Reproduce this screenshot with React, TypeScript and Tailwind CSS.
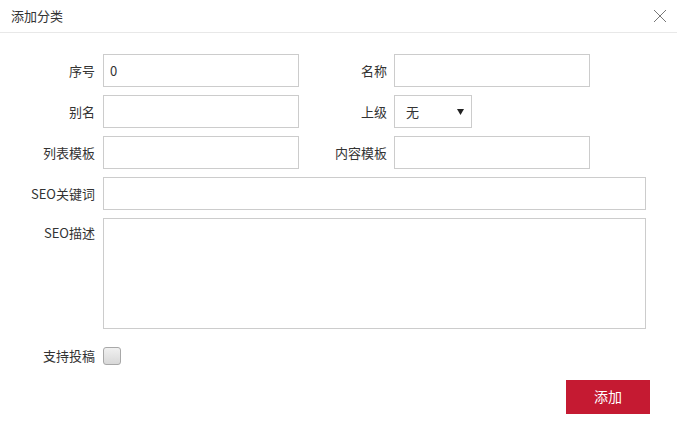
import React from "react";

const font = { fontFamily: '"Microsoft YaHei", "Noto Sans CJK SC", "Noto Sans", sans-serif' };

const Label: React.FC<{ text: string; className?: string }> = ({ text, className }) => (
  <label className={`shrink-0 text-right text-[13px] text-[#333] ${className ?? ""}`}>{text}</label>
);

const inputCls =
  "h-[33px] border border-[#ccc] bg-white px-[6px] text-[13px] text-[#333] outline-none";

const App: React.FC = () => {
  return (
    <div className="h-[434px] w-[677px] bg-white" style={font}>
      {/* Header */}
      <div className="flex h-[33px] items-center justify-between border-b border-[#e8e8e8] pl-[11px] pr-[9px]">
        <span className="text-[13px] text-[#333]">添加分类</span>
        <button className="flex h-[16px] w-[16px] items-center justify-center">
          <svg width="14" height="14" viewBox="0 0 14 14" fill="none" stroke="#777" strokeWidth="1">
            <path d="M1 1 L13 13 M13 1 L1 13" />
          </svg>
        </button>
      </div>

      {/* Form */}
      <div className="flex flex-col gap-[8px] pl-[10px] pt-[21px]">
        <div className="flex items-center">
          <Label text="序号" className="w-[93px] pr-[8px]" />
          <input className={`${inputCls} w-[196px]`} defaultValue="0" />
          <Label text="名称" className="w-[95px] pr-[7px]" />
          <input className={`${inputCls} w-[196px]`} />
        </div>

        <div className="flex items-center">
          <Label text="别名" className="w-[93px] pr-[8px]" />
          <input className={`${inputCls} w-[196px]`} />
          <Label text="上级" className="w-[95px] pr-[7px]" />
          <div className="flex h-[33px] w-[78px] items-center justify-between border border-[#ccc] pl-[11px] pr-[7px] text-[13px] text-[#333]">
            <span>无</span>
            <svg width="7" height="6" viewBox="0 0 7 6">
              <path d="M0 0 H7 L3.5 6 Z" fill="#222" />
            </svg>
          </div>
        </div>

        <div className="flex items-center">
          <Label text="列表模板" className="w-[93px] pr-[8px]" />
          <input className={`${inputCls} w-[196px]`} />
          <Label text="内容模板" className="w-[95px] pr-[7px]" />
          <input className={`${inputCls} w-[196px]`} />
        </div>

        <div className="flex items-center">
          <Label text="SEO关键词" className="w-[93px] pr-[8px]" />
          <input className={`${inputCls} w-[543px]`} />
        </div>

        <div className="flex items-start">
          <Label text="SEO描述" className="w-[93px] pr-[8px] pt-[5px]" />
          <textarea className="h-[111px] w-[543px] resize-none border border-[#ccc] px-[6px] py-[6px] text-[13px] outline-none" />
        </div>

        <div className="mt-[9px] flex items-center">
          <Label text="支持投稿" className="w-[93px] pr-[8px]" />
          <span className="h-[18px] w-[18px] rounded-[3px] border border-[#a8a8a8] bg-gradient-to-b from-[#f0f0f0] to-[#d8d8d8]" />
        </div>
      </div>

      {/* Footer */}
      <div className="flex justify-end pr-[27px] pt-[14px]">
        <button className="h-[34px] w-[84px] bg-[#c51a32] text-[14px] text-white">添加</button>
      </div>
    </div>
  );
};

export default App;
